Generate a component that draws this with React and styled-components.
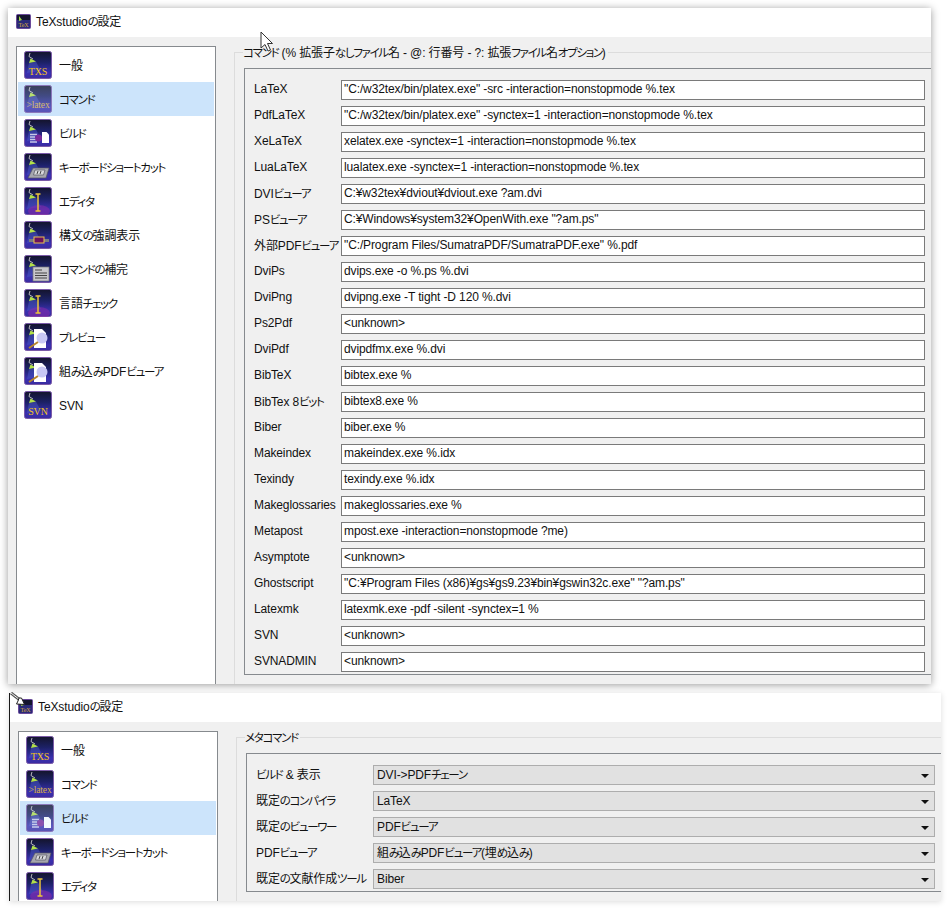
import React from "react";
import styled, { createGlobalStyle } from "styled-components";

const GlobalStyle = createGlobalStyle`
    html, body {
        margin: 0;
        padding: 0;
        background: #fff;
    }
    body {
        font-family: "Liberation Sans", "Noto Sans CJK JP", sans-serif;
        font-size: 12px;
        font-feature-settings: "palt";
        letter-spacing: -0.12px;
        color: #111;
    }
`;

const COMMANDS = [
    ["LaTeX", '"C:/w32tex/bin/platex.exe" -src -interaction=nonstopmode %.tex'],
    ["PdfLaTeX", '"C:/w32tex/bin/platex.exe" -synctex=1 -interaction=nonstopmode %.tex'],
    ["XeLaTeX", "xelatex.exe -synctex=1 -interaction=nonstopmode %.tex"],
    ["LuaLaTeX", "lualatex.exe -synctex=1 -interaction=nonstopmode %.tex"],
    ["DVIビューア", "C:¥w32tex¥dviout¥dviout.exe ?am.dvi"],
    ["PSビューア", 'C:¥Windows¥system32¥OpenWith.exe "?am.ps"'],
    ["外部PDFビューア", '"C:/Program Files/SumatraPDF/SumatraPDF.exe" %.pdf'],
    ["DviPs", "dvips.exe -o %.ps %.dvi"],
    ["DviPng", "dvipng.exe -T tight -D 120 %.dvi"],
    ["Ps2Pdf", "<unknown>"],
    ["DviPdf", "dvipdfmx.exe %.dvi"],
    ["BibTeX", "bibtex.exe %"],
    ["BibTex 8ビット", "bibtex8.exe %"],
    ["Biber", "biber.exe %"],
    ["Makeindex", "makeindex.exe %.idx"],
    ["Texindy", "texindy.exe %.idx"],
    ["Makeglossaries", "makeglossaries.exe %"],
    ["Metapost", "mpost.exe -interaction=nonstopmode ?me)"],
    ["Asymptote", "<unknown>"],
    ["Ghostscript", '"C:¥Program Files (x86)¥gs¥gs9.23¥bin¥gswin32c.exe" "?am.ps"'],
    ["Latexmk", "latexmk.exe -pdf -silent -synctex=1 %"],
    ["SVN", "<unknown>"],
    ["SVNADMIN", "<unknown>"]
];

const META = [
    ["ビルド & 表示", "DVI->PDFチェーン"],
    ["既定のコンパイラ", "LaTeX"],
    ["既定のビューワー", "PDFビューア"],
    ["PDFビューア", "組み込みPDFビューア(埋め込み)"],
    ["既定の文献作成ツール", "Biber"]
];

const NAV_FULL = [
    ["txs", "一般"],
    ["latex", "コマンド"],
    ["build", "ビルド"],
    ["keys", "キーボードショートカット"],
    ["cursor", "エディタ"],
    ["syntax", "構文の強調表示"],
    ["complete", "コマンドの補完"],
    ["cursor", "言語チェック"],
    ["preview", "プレビュー"],
    ["preview", "組み込みPDFビューア"],
    ["svn", "SVN"]
];

const Page = styled.div`
    width: 947px;
    height: 908px;
    padding: 8px 0 0 8px;
    box-sizing: border-box;
    overflow: hidden;
    position: relative;
`;

const Window = styled.div`
    display: flex;
    flex-direction: column;
    box-sizing: border-box;
    width: ${(p) => p.$width}px;
    height: ${(p) => p.$height}px;
    margin: ${(p) => p.$margin || 0};
    background: #f0f0f0;
    overflow: hidden;
    box-shadow: ${(p) => p.$shadow};
    border-left: ${(p) => (p.$edge ? "1px solid #1a1a1a" : "none")};
`;

const TitleBar = styled.div`
    flex: none;
    height: 29px;
    box-sizing: border-box;
    padding: 0 0 2px 8px;
    display: flex;
    align-items: center;
    gap: 5px;
    background: #fff;
    font-size: 12px;
    line-height: 14px;
`;

const Body = styled.div`
    flex: 1;
    min-height: 0;
    display: flex;
    padding: 9px 0 0 8px;
`;

const NavList = styled.div`
    flex: none;
    width: 200px;
    box-sizing: border-box;
    padding: 1px;
    background: #fff;
    border: 1px solid #868a8e;
    border-bottom: none;
    overflow: hidden;
`;

const NavRow = styled.div`
    height: 34px;
    display: flex;
    align-items: center;
    gap: 7px;
    padding-left: 6px;
    background: ${(p) => (p.$active ? "#cce4fb" : "transparent")};
`;

const NavLabel = styled.span`
    line-height: 14px;
    padding-top: 2px;
`;

const IconWrap = styled.span`
    flex: none;
    display: block;
    width: 28px;
    height: 28px;
    opacity: ${(p) => (p.$active ? 0.78 : 1)};
`;

const Group = styled.div`
    flex: 1;
    min-width: 0;
    margin: 6px 0 0 18px;
    padding: 15px 0 0 9px;
    border-top: 1px solid #dcdcdc;
    border-left: 1px solid #dcdcdc;
    position: relative;
    display: flex;
    flex-direction: column;
`;

const GroupTitle = styled.span`
    position: absolute;
    top: -7px;
    left: 8px;
    padding: 0 2px 0 0;
    line-height: 14px;
    background: #f0f0f0;
    white-space: nowrap;
`;

const Inner = styled.div`
    display: flex;
    flex-direction: column;
    gap: 6px;
    padding: 11px 6px 2px 9px;
    border: 1px solid #868a8e;
    border-right: none;
`;

const FormRow = styled.div`
    display: flex;
    align-items: center;
    height: 20px;
`;

const RowLabel = styled.span`
    flex: none;
    width: ${(p) => p.$width}px;
    line-height: 14px;
    padding-bottom: ${(p) => (p.$jp ? 0 : 2)}px;
    white-space: nowrap;
`;

const TextField = styled.div`
    flex: 1;
    min-width: 0;
    height: 20px;
    line-height: 16px;
    box-sizing: border-box;
    padding: 0 2px;
    background: #fff;
    border: 1px solid #7a7a7a;
    white-space: pre;
    overflow: hidden;
`;

const ComboBox = styled.div`
    flex: 1;
    min-width: 0;
    height: 20px;
    box-sizing: border-box;
    padding: 0 5px 0 3px;
    display: flex;
    align-items: center;
    justify-content: space-between;
    background: #e1e1e1;
    border: 1px solid #adadad;
    line-height: 14px;
`;

const ComboArrow = styled.span`
    width: 0;
    height: 0;
    margin-top: 1px;
    border-left: 4px solid transparent;
    border-right: 4px solid transparent;
    border-top: 4px solid #111;
`;

// the original UI font has narrow kana, kanji keep their full width
const Kana = styled.span`
    font-size: 11.5px;
    letter-spacing: -1.3px;
`;

const Pointer = styled.svg`
    position: absolute;
    left: ${(p) => p.$left}px;
    top: ${(p) => p.$top}px;
`;

const hasJapanese = (text) => /[^\x00-\x7f]/.test(text);

function Jp({ children }) {
    const parts = children.split(/([\u3040-\u30ff]+)/);
    return parts.map((part, i) => (i % 2 ? <Kana key={i}>{part}</Kana> : part));
}

function TitleIcon() {
    return (
        <svg width="15" height="15" viewBox="0 0 15 15">
            <rect x="0.5" y="0.5" width="14" height="14" rx="1" fill="#2a2a78" stroke="#6a4a9a" />
            <rect x="1" y="1" width="13" height="5" fill="#15152e" />
            <path d="M3 2 L6 6 L3 7 Z" fill="#9fd84a" />
            <text x="7.5" y="13" fontSize="6" textAnchor="middle" fontFamily="Liberation Serif, serif" fill="#d8a93a">
                TeX
            </text>
        </svg>
    );
}

function Glyph({ kind }) {
    if (kind === "txs" || kind === "svn") {
        return (
            <text x="14" y="24" fontSize="10" textAnchor="middle" fontFamily="Liberation Serif, serif" fill="#f2c21c">
                {kind === "txs" ? "TXS" : "SVN"}
            </text>
        );
    }
    if (kind === "latex") {
        return (
            <text x="14" y="23" fontSize="9.5" textAnchor="middle" fontFamily="Liberation Serif, serif" fill="#d8b040">
                {">latex"}
            </text>
        );
    }
    if (kind === "build") {
        return (
            <g>
                <path d="M6 15.500h7M6 18h5M6 20.500h6M6 23h7" stroke="#c8c8e8" strokeWidth="1.3" />
                <circle cx="14.500" cy="19" r="3.500" fill="#7a2a9a" />
                <path d="M18 13h4.500l2.500 2.500V24h-7z" fill="#fff" />
            </g>
        );
    }
    if (kind === "keys") {
        return (
            <g>
                <path d="M9 15h16l-3 10H4z" fill="#a6a6ae" stroke="#55555f" strokeWidth="0.7" />
                <path d="M11 17h10l-1.500 5H9.500z" fill="#d8d8dc" stroke="#55555f" strokeWidth="0.7" />
                <path d="M14 18l-1 3M17 18l-1 3" stroke="#333" strokeWidth="0.9" />
            </g>
        );
    }
    if (kind === "cursor") {
        return (
            <g>
                <ellipse cx="15" cy="24" rx="11" ry="6" fill="#8a2aa8" opacity="0.55" />
                <path d="M11.500 7h5M14 7v17M11.500 24h5" stroke="#eac43a" strokeWidth="1.5" fill="none" />
            </g>
        );
    }
    if (kind === "syntax") {
        return (
            <g>
                <path d="M5 19.500h5M20 19.500h5" stroke="#7a7a80" strokeWidth="3" />
                <rect x="10" y="16" width="10" height="6" fill="#6a1060" stroke="#e8c04a" />
            </g>
        );
    }
    if (kind === "complete") {
        return (
            <g>
                <rect x="9" y="12" width="16" height="14" fill="#c8c8cc" stroke="#777" strokeWidth="0.7" />
                <path d="M11 15h7M11 18h12M11 20.500h12M11 23h12" stroke="#444" strokeWidth="1.2" />
            </g>
        );
    }
    return (
        <g>
            <path d="M10 6h8l4 4v15H10z" fill="#fff" />
            <circle cx="18" cy="15" r="5.500" fill="#c8c8f4" />
            <path d="M5 25l9-6" stroke="#b8862a" strokeWidth="2" />
        </g>
    );
}

function NavIcon({ kind, active, id }) {
    return (
        <IconWrap $active={active}>
            <svg width="28" height="28" viewBox="0 0 28 28">
                <defs>
                    <linearGradient id={`bg-${id}`} x1="0" y1="0" x2="0" y2="1">
                        <stop offset="0" stopColor="#14142c" />
                        <stop offset="0.4" stopColor="#1c2166" />
                        <stop offset="0.8" stopColor="#3a30b0" />
                        <stop offset="1" stopColor="#3a2ca0" />
                    </linearGradient>
                </defs>
                <rect x="0.5" y="0.5" width="27" height="27" rx="2" fill={`url(#bg-${id})`} stroke="#7a5aa8" />
                <path d="M5 5.500 L6 2 M5 5.500 L9 8" stroke="#c8c8c8" strokeWidth="0.9" fill="none" />
                <path d="M5 12 L12 10.500 L17 20 L3 22 Z" fill="#4a58c8" opacity="0.5" />
                <path d="M6.500 7.500 L12 10.500 L5 12 Z" fill="#b2e04a" />
                <Glyph kind={kind} />
            </svg>
        </IconWrap>
    );
}

function ArrowCursor({ left, top }) {
    return (
        <Pointer $left={left} $top={top} width="16" height="22" viewBox="0 0 16 22">
            <path d="M1 1 L1 17 L5 13.500 L8 20 L10.500 19 L7.500 12.500 L12.500 12.500 Z" fill="#fff" stroke="#333" strokeWidth="1" />
        </Pointer>
    );
}

function ResizeCursor({ left, top }) {
    return (
        <Pointer $left={left} $top={top} width="16" height="14" viewBox="0 0 16 14">
            <path d="M1 1 L10 8" stroke="#555" strokeWidth="3" />
            <path d="M1 1 L10 8" stroke="#eee" strokeWidth="1" />
            <path d="M14.500 12.500 L6.500 12 L8 9 L9 6 L11.500 6 Z" fill="#fff" stroke="#222" strokeWidth="1" />
        </Pointer>
    );
}

function NavPanel({ items, activeIndex, prefix }) {
    return (
        <NavList>
            {items.map(([kind, label], i) => (
                <NavRow key={label} $active={i === activeIndex}>
                    <NavIcon kind={kind} active={i === activeIndex} id={`${prefix}-${i}`} />
                    <NavLabel>
                        <Jp>{label}</Jp>
                    </NavLabel>
                </NavRow>
            ))}
        </NavList>
    );
}

export default function App() {
    return (
        <Page>
            <GlobalStyle />
            <Window $width={923} $height={676} $shadow="0 1px 8px rgba(0,0,0,0.4)">
                <TitleBar>
                    <TitleIcon />
                    <span>
                        <Jp>TeXstudioの設定</Jp>
                    </span>
                </TitleBar>
                <Body>
                    <NavPanel items={NAV_FULL} activeIndex={1} prefix="a" />
                    <Group>
                        <GroupTitle>
                            <Jp>コマンド (% 拡張子なしファイル名 - @: 行番号 - ?: 拡張ファイル名オプション)</Jp>
                        </GroupTitle>
                        <Inner>
                            {COMMANDS.map(([label, value]) => (
                                <FormRow key={label}>
                                    <RowLabel $width={87} $jp={hasJapanese(label)}>
                                        <Jp>{label}</Jp>
                                    </RowLabel>
                                    <TextField>{value}</TextField>
                                </FormRow>
                            ))}
                        </Inner>
                    </Group>
                </Body>
            </Window>
            <Window $width={932} $height={208} $margin="9px 0 0 1px" $shadow="0 1px 6px rgba(0,0,0,0.14)" $edge>
                <TitleBar>
                    <TitleIcon />
                    <span>
                        <Jp>TeXstudioの設定</Jp>
                    </span>
                </TitleBar>
                <Body>
                    <NavPanel items={NAV_FULL.slice(0, 5)} activeIndex={2} prefix="b" />
                    <Group>
                        <GroupTitle>
                            <Jp>メタコマンド</Jp>
                        </GroupTitle>
                        <Inner>
                            {META.map(([label, value]) => (
                                <FormRow key={label}>
                                    <RowLabel $width={117} $jp>
                                        <Jp>{label}</Jp>
                                    </RowLabel>
                                    <ComboBox>
                                        <span>
                                            <Jp>{value}</Jp>
                                        </span>
                                        <ComboArrow />
                                    </ComboBox>
                                </FormRow>
                            ))}
                        </Inner>
                    </Group>
                </Body>
            </Window>
            <ArrowCursor left={260} top={31} />
            <ResizeCursor left={10} top={692} />
        </Page>
    );
}
